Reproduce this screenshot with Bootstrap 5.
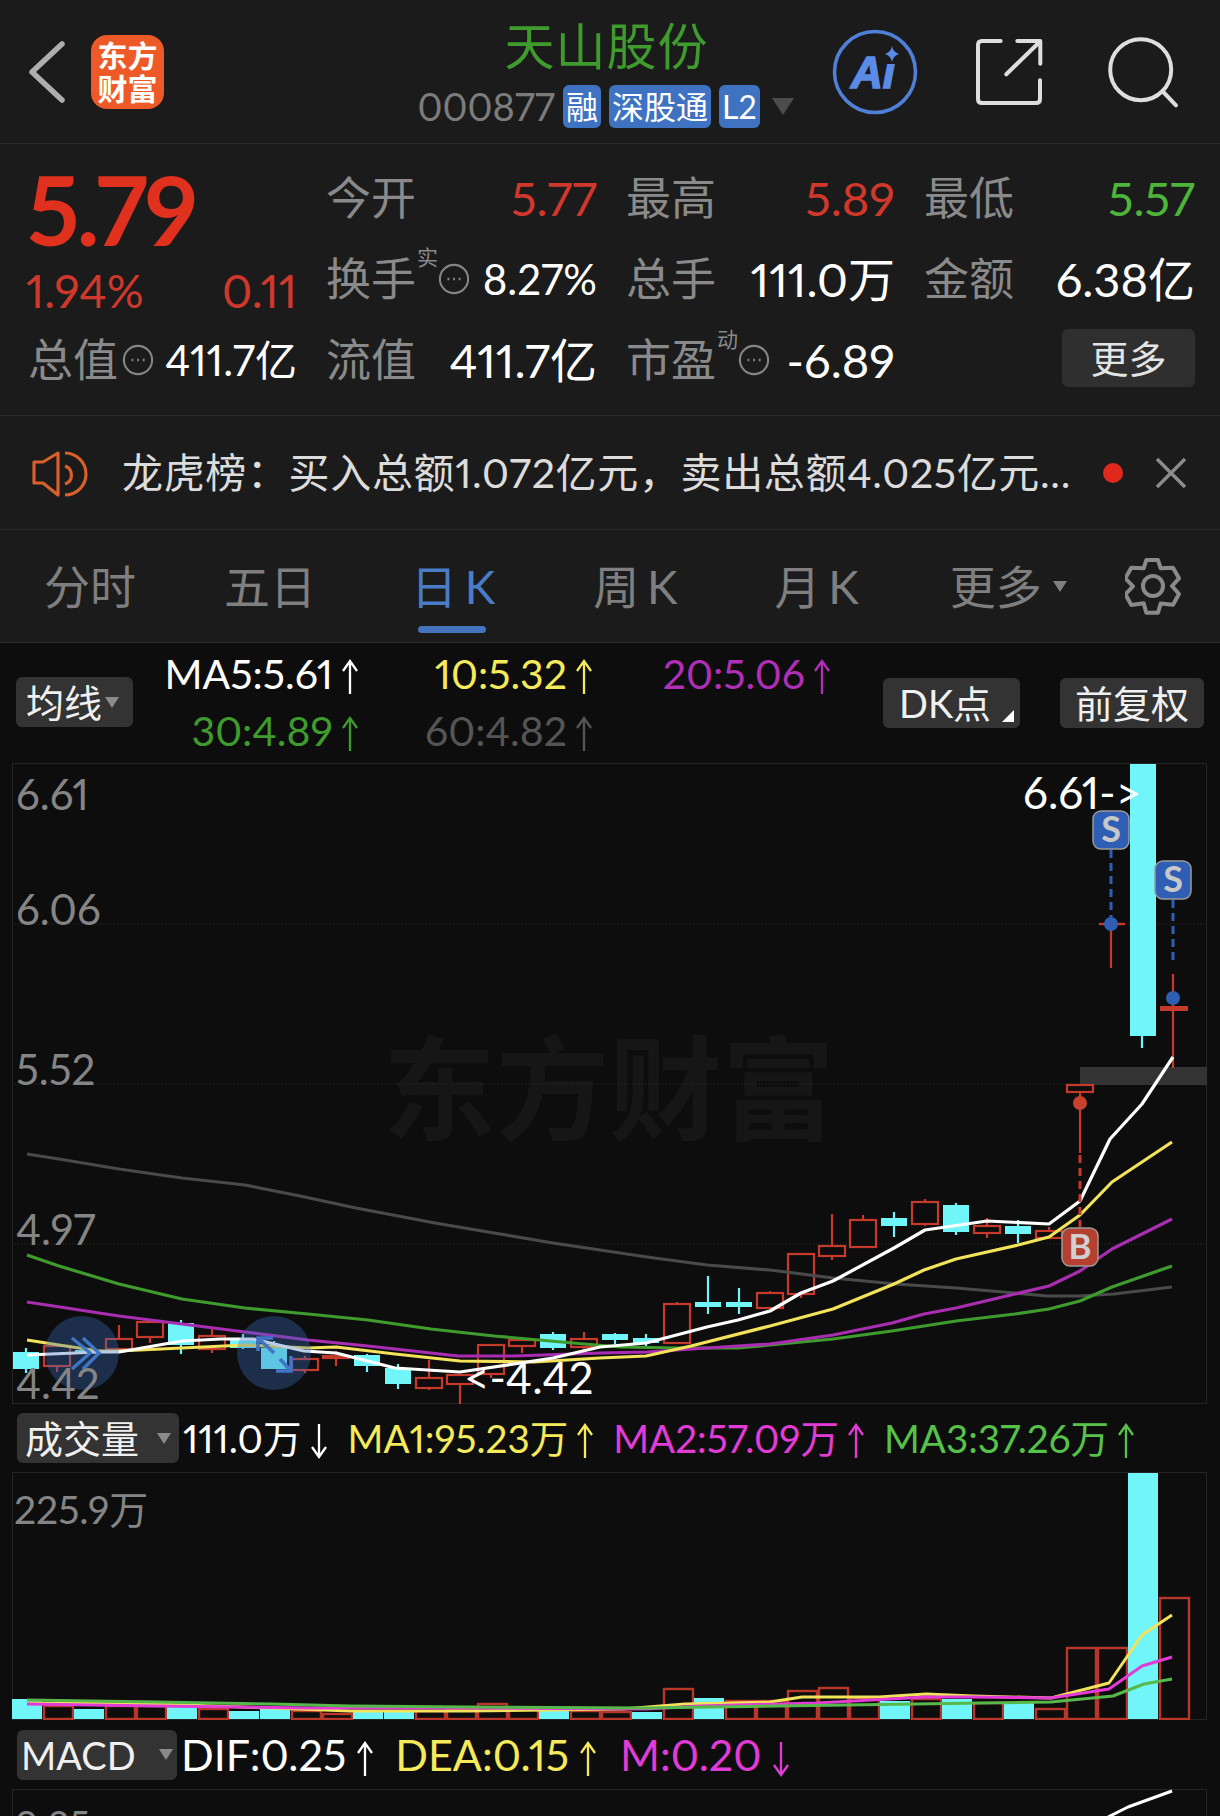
<!DOCTYPE html>
<html lang="zh-CN">
<head>
<meta charset="UTF-8">
<title>天山股份 000877</title>
<link href="https://cdn.jsdelivr.net/npm/bootstrap@5.3.3/dist/css/bootstrap.min.css" rel="stylesheet">
<style>
    html, body { background: #0d0d0d; }
    body { width: 1220px; height: 1816px; overflow: hidden; font-family: Lato, "Noto Sans CJK SC", sans-serif; font-weight: 400; color: #fff; font-variant-numeric: proportional-nums; }
    svg { display: block; }
    svg text { font-family: Lato, "Noto Sans CJK SC", sans-serif; }

    .top-bar { height: 144px; background: #1b1b1b; border-bottom: 1px solid #2b2b2b; display: grid; grid-template-columns: 1fr auto 1fr; padding: 0 39px 0 28px; }
    .app-logo { width: 73px; height: 74px; margin-left: 25px; border-radius: 16px; background: #ee5a27; font-size: 30px; line-height: 33px; font-weight: 700; text-align: center; padding-top: 4px; }
    .stock-name { color: #3f9b2d; font-size: 50px; line-height: 60px; margin-top: 16px; letter-spacing: 1px; text-align: center; padding-left: 4px; }
    .stock-code { color: #7c7c7c; font-size: 38px; line-height: 44px; }
    .code-row { margin-top: 8px; padding-left: 2px; }
    .tag-blue { background: #3f72c0; color: #fff; border-radius: 6px; height: 43px; line-height: 43px; padding: 0 3px; font-size: 32px; margin-left: 8px; }
    .tri-down { width: 0; height: 0; border: 11px solid transparent; border-top: 17px solid #4c4c4c; border-bottom: 0; margin-left: 12px; }

    .quote-panel { height: 272px; background: #1b1b1b; border-bottom: 1px solid #2b2b2b; padding: 14px 25px 0 28px; display: grid; grid-template-columns: 269px 271px 269px 271px; column-gap: 29px; grid-template-rows: 80px 82px 80px; }
    .price-cell { grid-row: span 2; }
    .big-price { color: #e0301e; font-size: 96px; line-height: 96px; font-weight: 700; margin: 3px 0 0 -1px; letter-spacing: -3px; }
    .price-sub { color: #d0382b; font-size: 46px; line-height: 50px; margin: 9px 0 0 -2px; }
    .q-label { color: #8a8a8a; font-size: 45px; line-height: 50px; white-space: nowrap; }
    .q-val { font-size: 47px; line-height: 50px; white-space: nowrap; }
    .q-val.tight { font-size: 42px; }
    .q-sup { color: #8a8a8a; font-size: 21px; line-height: 21px; align-self: flex-start; margin: 8px 0 0 1px; }
    .red-txt { color: #d0382b; }
    .green-txt { color: #4cb53a; }
    .more-btn { width: 133px; height: 58px; background: #2f2f2f; color: #e4e4e4; font-size: 38px; line-height: 58px; text-align: center; border-radius: 6px; margin-top: -5px; }

    .notice-row { height: 114px; background: #1b1b1b; border-bottom: 1px solid #2b2b2b; padding-left: 20px; }
    .notice-txt { color: #dcdcdc; font-size: 41px; letter-spacing: .65px; margin-left: 12px; width: 976px; white-space: nowrap; }
    .red-dot { width: 20px; height: 20px; border-radius: 50%; background: #e0281c; margin-left: 5px; }

    .tab-row { height: 113px; background: #1b1b1b; border-bottom: 1px solid #2b2b2b; position: relative; }
    .tab-item { position: relative; color: #7f7f7f; font-size: 46px; line-height: 113px; white-space: nowrap; word-spacing: -4px; margin-bottom: 0; }
    .tab-item.on { color: #4a7bc6; }
    .tab-item.on::after { content: ""; position: absolute; left: 7px; right: 9px; top: 96px; height: 7px; border-radius: 4px; background: #4673bd; }
    .tri-small { width: 0; height: 0; border: 7px solid transparent; border-top: 11px solid #7f7f7f; border-bottom: 0; margin-left: 11px; }

    .ma-head { height: 120px; padding: 4px 0 0 16px; }
    .sel-box { background: #333; color: #f0f0f0; border-radius: 6px; font-size: 38px; height: 50px; line-height: 50px; white-space: nowrap; }
    .ma-grid { display: grid; grid-template-columns: 234px 234px 238px; grid-auto-rows: 57px; margin-left: -6px; justify-items: end; margin-top: -2px; }
    .ma-item { font-size: 41px; line-height: 57px; white-space: nowrap; }
    .c-white { color: #fff; } .c-yellow { color: #f4ea5a; } .c-purple { color: #b02fb6; } .c-green { color: #3f9b2d; } .c-gray { color: #555; }
    .c-pink { color: #e23bd6; } .c-lime { color: #56c24a; }
    .arr { display: inline-block; width: 22px; height: 36px; vertical-align: -6px; margin-left: 6px; }
    .legend-row { height: 68px; padding-left: 17px; }
    .vol-row .ma-item { font-size: 38.6px; }
    .macd-row { height: 69px; }
    .macd-row .ma-item { font-size: 43px; }
    .macd-row .arr { margin-left: 8px; }
    .chart-wrap { margin-left: 12px; width: 1195px; }
</style>
</head>
<body>

<svg width="0" height="0" class="position-absolute">
    <symbol id="arrUp" viewBox="0 0 22 36"><path d="M11 35V2M4 12 11 2l7 10" fill="none" stroke="currentColor" stroke-width="2.3"/></symbol>
    <symbol id="arrDown" viewBox="0 0 22 36"><path d="M11 1v33M4 24l7 10 7-10" fill="none" stroke="currentColor" stroke-width="2.3"/></symbol>
    <symbol id="dotCircle" viewBox="0 0 34 34"><circle cx="17" cy="17" r="15" fill="none" stroke="#858585" stroke-width="2.2"/><path d="M10 17h2M16 17h2M22 17h2" stroke="#858585" stroke-width="2.4"/></symbol>
</svg>

<div class="top-bar">
    <div class="d-flex align-items-center">
        <svg width="38" height="64" viewBox="0 0 38 64"><path d="M34 4 4 32l30 28" fill="none" stroke="#aeaeae" stroke-width="5.5" stroke-linecap="round" stroke-linejoin="round"/></svg>
        <div class="app-logo">东方<br>财富</div>
    </div>
    <div>
        <div class="stock-name">天山股份</div>
        <div class="d-flex align-items-center code-row">
            <span class="stock-code">000877</span>
            <span class="tag-blue">融</span>
            <span class="tag-blue">深股通</span>
            <span class="tag-blue">L2</span>
            <span class="tri-down"></span>
        </div>
    </div>
    <div class="d-flex align-items-center justify-content-end">
        <svg width="88" height="88" viewBox="0 0 88 88" style="margin-right:54px">
            <circle cx="44" cy="44" r="40.5" fill="none" stroke="#4f7fd6" stroke-width="3.6"/>
            <text x="42" y="60" text-anchor="middle" fill="#5a8be6" stroke="#5a8be6" stroke-width="1.6" font-size="44" font-weight="700" font-style="italic" style="font-family:'Liberation Sans',sans-serif">Ai</text>
            <rect x="50" y="24" width="20" height="12" fill="#1b1b1b"/>
            <path d="M61 18q1 6 7 8-6 2-7 8-1-6-7-8 6-2 7-8z" fill="#5a8be6"/>
        </svg>
        <svg width="72" height="72" viewBox="0 0 72 72" style="margin-right:60px">
            <path d="M27.7 5H9q-4 0-4 4v54q0 4 4 4h54q4 0 4-4V44.3M44.3 5h23v22.7M67 5.5 33.3 38.3" fill="none" stroke="#dedede" stroke-width="4" stroke-linecap="round" stroke-linejoin="round"/>
        </svg>
        <svg width="76" height="80" viewBox="0 0 76 80">
            <circle cx="35.7" cy="37.7" r="30.5" fill="none" stroke="#dedede" stroke-width="4"/>
            <path d="M58.3 60 71 73.3" stroke="#dedede" stroke-width="4" stroke-linecap="round"/>
        </svg>
    </div>
</div>

<div class="quote-panel">
    <div class="price-cell">
        <div class="big-price">5.79</div>
        <div class="d-flex justify-content-between price-sub"><span>1.94%</span><span>0.11</span></div>
    </div>
    <div class="d-flex justify-content-between align-items-center"><span class="q-label">今开</span><span class="q-val red-txt">5.77</span></div>
    <div class="d-flex justify-content-between align-items-center"><span class="q-label">最高</span><span class="q-val red-txt">5.89</span></div>
    <div class="d-flex justify-content-between align-items-center"><span class="q-label">最低</span><span class="q-val green-txt">5.57</span></div>

    <div class="d-flex align-items-center"><span class="q-label">换手</span><span class="q-sup">实</span><svg width="32" height="32"><use href="#dotCircle"/></svg><span class="q-val tight ms-auto">8.27%</span></div>
    <div class="d-flex justify-content-between align-items-center"><span class="q-label">总手</span><span class="q-val">111.0万</span></div>
    <div class="d-flex justify-content-between align-items-center"><span class="q-label">金额</span><span class="q-val">6.38亿</span></div>

    <div class="d-flex align-items-center"><span class="q-label">总值</span><svg width="32" height="32" class="ms-1"><use href="#dotCircle"/></svg><span class="q-val tight ms-auto">411.7亿</span></div>
    <div class="d-flex justify-content-between align-items-center"><span class="q-label">流值</span><span class="q-val">411.7亿</span></div>
    <div class="d-flex align-items-center"><span class="q-label">市盈</span><span class="q-sup">动</span><svg width="32" height="32"><use href="#dotCircle"/></svg><span class="q-val ms-auto">-6.89</span></div>
    <div class="d-flex justify-content-end align-items-center"><span class="more-btn">更多</span></div>
</div>

<div class="notice-row d-flex align-items-center">
    <svg width="90" height="80" viewBox="0 0 90 80">
        <path d="M38 20 23 29H14V50H23L38 62Z" fill="none" stroke="#d9602a" stroke-width="3.2" stroke-linejoin="round"/>
        <path d="M45 33A9.5 9.5 0 0 1 45 51M45 20A21 21 0 0 1 45 62" fill="none" stroke="#d9602a" stroke-width="3.2"/>
    </svg>
    <div class="notice-txt">龙虎榜：买入总额1.072亿元，卖出总额4.025亿元...</div>
    <span class="red-dot"></span>
    <svg width="34" height="34" viewBox="0 0 34 34" style="margin-left:31px"><path d="M3 3 31 31M31 3 3 31" stroke="#8c8c8c" stroke-width="3.4"/></svg>
</div>

<nav class="tab-row d-flex">
    <div class="tab-item" style="margin-left:44px">分时</div>
    <div class="tab-item" style="margin-left:88px">五日</div>
    <div class="tab-item on" style="margin-left:95px">日 K</div>
    <div class="tab-item" style="margin-left:98px">周 K</div>
    <div class="tab-item" style="margin-left:97px">月 K</div>
    <div class="tab-item d-flex align-items-center" style="margin-left:91px">更多<span class="tri-small"></span></div>
    <svg class="ms-auto align-self-center" style="margin-right:35px" width="60" height="60" viewBox="27 15 60 60">
        <path d="M48.3 19H60l2.7 8.3L75 26.7 81 37.3 74 45l7 8-6 10.7-12.3-1.3L60 71.7H48.3l-2.6-9.4-12.4 1.7-6-10.7 7.7-8-7.7-8 6-10.6 12.4.6z" fill="none" stroke="#8a8a8a" stroke-width="4" stroke-linejoin="round"/>
        <circle cx="55" cy="45" r="10" fill="none" stroke="#8a8a8a" stroke-width="4"/>
    </svg>
</nav>

<div class="ma-head d-flex align-items-start">
    <div class="sel-box d-flex align-items-center" style="width:117px;margin-top:30px;padding-left:10px">均线<span class="tri-small" style="margin-left:3px;border-top-color:#8a8a8a"></span></div>
    <div class="ma-grid">
        <div class="ma-item c-white">MA5:5.61<svg class="arr"><use href="#arrUp"/></svg></div>
        <div class="ma-item c-yellow">10:5.32<svg class="arr"><use href="#arrUp"/></svg></div>
        <div class="ma-item c-purple">20:5.06<svg class="arr"><use href="#arrUp"/></svg></div>
        <div class="ma-item c-green">30:4.89<svg class="arr"><use href="#arrUp"/></svg></div>
        <div class="ma-item c-gray">60:4.82<svg class="arr"><use href="#arrUp"/></svg></div>
    </div>
    <div class="sel-box position-relative ps-3" style="width:137px;margin:31px 0 0 50px">DK点<span class="position-absolute" style="right:6px;bottom:6px;width:0;height:0;border-left:12px solid transparent;border-bottom:12px solid #fff"></span></div>
    <div class="sel-box text-center" style="width:144px;margin:31px 0 0 40px">前复权</div>
</div>

<div class="chart-wrap" id="mainChart"></div>

<div class="legend-row vol-row d-flex align-items-center">
    <div class="sel-box d-flex align-items-center justify-content-between px-2" style="width:162px">成交量<span class="tri-small" style="border-top-color:#8a8a8a"></span></div>
    <div class="ma-item c-white ms-1">111.0万<svg class="arr"><use href="#arrDown"/></svg></div>
    <div class="ma-item c-yellow" style="margin-left:18px">MA1:95.23万<svg class="arr"><use href="#arrUp"/></svg></div>
    <div class="ma-item c-pink" style="margin-left:17px">MA2:57.09万<svg class="arr"><use href="#arrUp"/></svg></div>
    <div class="ma-item c-lime" style="margin-left:17px">MA3:37.26万<svg class="arr"><use href="#arrUp"/></svg></div>
</div>

<div class="chart-wrap" id="volChart"></div>

<div class="legend-row macd-row d-flex align-items-center">
    <div class="sel-box d-flex align-items-center justify-content-between px-1" style="width:160px">MACD<span class="tri-small" style="border-top-color:#8a8a8a"></span></div>
    <div class="ma-item c-white ms-1">DIF:0.25<svg class="arr"><use href="#arrUp"/></svg></div>
    <div class="ma-item c-yellow" style="margin-left:19px">DEA:0.15<svg class="arr"><use href="#arrUp"/></svg></div>
    <div class="ma-item c-pink" style="margin-left:21px">M:0.20<svg class="arr"><use href="#arrDown"/></svg></div>
</div>

<div class="chart-wrap" id="macdChart"></div>

<script src="https://cdn.jsdelivr.net/npm/bootstrap@5.3.3/dist/js/bootstrap.bundle.min.js"></script>
<script>
    const RED = '#c63a2c', CYAN = '#70f5f8';

    // c/r, body top, body bottom, wick top, wick bottom
    const candles = [
        ['c',1351,1368,1347,1372],['r',1345,1365,1345,1371],['c',1349,1352,1347,1354],['r',1338,1348,1324,1348],
        ['r',1321,1336,1321,1342],['c',1322,1344,1319,1353],['r',1335,1348,1327,1352],['c',1337,1347,1333,1348],
        ['c',1347,1368,1340,1368],['r',1358,1369,1355,1372],['r',1355,1357,1350,1365],['c',1354,1365,1353,1371],
        ['c',1367,1383,1363,1388],['r',1377,1387,1359,1389],['r',1374,1383,1374,1403],['r',1344,1373,1344,1377],
        ['r',1339,1345,1339,1352],['c',1333,1347,1331,1349],['r',1338,1346,1331,1348],['c',1333,1339,1332,1343],
        ['c',1337,1342,1333,1345],['r',1303,1342,1301,1342],['c',1301,1306,1275,1313],['c',1301,1306,1287,1313],
        ['r',1292,1307,1290,1308],['r',1253,1293,1252,1297],['r',1245,1255,1213,1259],['r',1219,1246,1214,1246],
        ['c',1217,1225,1211,1236],['r',1201,1223,1198,1225],['c',1204,1231,1202,1234],['r',1225,1232,1217,1237],
        ['c',1225,1233,1219,1242],['r',1230,1237,1226,1237],['r',1084,1091,1091,1152],['r',922,924,923,967],
        ['c',763,1035,763,1047],['r',1005,1009,973,1067]
    ];

    const lines = [
        ['#4a4a4a', [[27,1153],[59,1158],[119,1168],[182,1177],[245,1184],[300,1195],[356,1207],[435,1222],[494,1232],[553,1242],[620,1252],[647,1256],[707,1264],[770,1269],[833,1277],[896,1283],[956,1287],[1015,1292],[1047,1295],[1080,1295],[1114,1293],[1172,1286]]],
        ['#3f9b2d', [[27,1254],[59,1265],[119,1283],[182,1298],[245,1307],[308,1313],[368,1319],[431,1328],[494,1335],[573,1342],[620,1346],[679,1347],[738,1347],[770,1344],[833,1338],[892,1330],[956,1320],[1015,1313],[1049,1308],[1080,1300],[1112,1286],[1172,1265]]],
        ['#a92db0', [[27,1301],[119,1315],[182,1323],[245,1331],[308,1339],[368,1345],[458,1355],[514,1355],[600,1352],[647,1351],[707,1347],[770,1343],[833,1334],[892,1322],[924,1313],[956,1307],[1015,1293],[1049,1285],[1080,1270],[1112,1248],[1172,1218]]],
        ['#f2e35a', [[27,1339],[59,1344],[99,1350],[119,1350],[182,1347],[245,1344],[308,1347],[336,1346],[395,1353],[460,1360],[534,1361],[600,1357],[646,1355],[691,1345],[770,1325],[833,1308],[894,1283],[924,1269],[956,1258],[1018,1244],[1049,1236],[1080,1214],[1112,1181],[1172,1141]]],
        ['#ffffff', [[27,1354],[99,1351],[119,1351],[182,1340],[221,1338],[253,1338],[304,1350],[336,1352],[395,1367],[460,1371],[514,1363],[553,1357],[600,1346],[646,1342],[707,1326],[738,1319],[770,1310],[801,1292],[833,1280],[894,1247],[925,1229],[987,1220],[1049,1223],[1080,1200],[1110,1138],[1142,1103],[1173,1056]]]
    ];

    function poly(pts, color, w) {
        return `<polyline points="${pts.map(p => p.join(',')).join(' ')}" fill="none" stroke="${color}" stroke-width="${w}" stroke-linejoin="round"/>`;
    }

    function grayLabel(x, y, t, size) {
        return `<text x="${x}" y="${y}" fill="#858585" font-size="${size}">${t}</text>`;
    }

    function signal(x, top, dashEnd, color, label) {
        return `<line x1="${x}" y1="${top + 39}" x2="${x}" y2="${dashEnd}" stroke="${color}" stroke-width="3" stroke-dasharray="8 5"/>` +
            `<rect x="${x - 18}" y="${top}" width="36" height="38" rx="8" fill="${color}" stroke="#9a9a9a" stroke-width="1.5"/>` +
            `<text x="${x}" y="${top + 31}" text-anchor="middle" fill="#c8c8c8" font-size="36" font-weight="700">${label}</text>`;
    }

    function drawMain() {
        let s = `<svg width="1195" height="641" viewBox="12 762 1195 641">`;
        s += `<rect x="12.5" y="762.5" width="1194" height="640" fill="#0d0d0d" stroke="#252525"/>`;
        s += `<text x="383" y="1130" fill="#161616" font-size="113" font-weight="700">东方财富</text>`;
        [923, 1083, 1243].forEach(y => {
            s += `<line x1="12" x2="1207" y1="${y}" y2="${y}" stroke="#2c2c2c" stroke-dasharray="1 2"/>`;
        });
        s += `<rect x="1080" y="1066" width="127" height="18" fill="#333"/>`;

        candles.forEach((c, i) => {
            const x = 26 + i * 31;
            const color = c[0] === 'c' ? CYAN : RED;
            s += `<line x1="${x}" x2="${x}" y1="${c[3]}" y2="${c[4]}" stroke="${color}" stroke-width="2.2"/>`;
            if (i === 36) {
                s += `<rect x="1130" y="763" width="26" height="272" fill="${CYAN}"/>`;
            } else if (i === 35) {
                s += `<line x1="1099" x2="1125" y1="923" y2="923" stroke="${RED}" stroke-width="2.4"/>`;
            } else if (i === 37) {
                s += `<rect x="1160" y="1005" width="28" height="5" fill="${RED}"/>`;
            } else if (c[0] === 'c') {
                s += `<rect x="${x - 13}" y="${c[1]}" width="26" height="${c[2] - c[1]}" fill="${CYAN}"/>`;
            } else {
                s += `<rect x="${x - 13}" y="${c[1]}" width="26" height="${Math.max(c[2] - c[1], 2)}" fill="#0d0d0d" stroke="${RED}" stroke-width="2.2"/>`;
            }
        });

        lines.forEach(l => { s += poly(l[1], l[0], 3.2); });

        // blue markers sit over the candles and the lines
        s += `<circle cx="82" cy="1352" r="37" fill="#3c6ebe" fill-opacity=".35"/><circle cx="274" cy="1352" r="37" fill="#3c6ebe" fill-opacity=".35"/>`;
        s += `<path d="M72 1337 90 1352 72 1368M83 1337 99 1352 83 1368" fill="none" stroke="#3f75c6" stroke-width="3.4"/>`;
        s += `<path d="M258 1350V1337H273M258 1337 274 1352M291 1355V1370H276M280 1358 291 1370" fill="none" stroke="#3f75c6" stroke-width="3.6"/>`;

        s += grayLabel(16, 809, '6.61', 42) + grayLabel(16, 924, '6.06', 42) + grayLabel(16, 1084, '5.52', 42) + grayLabel(16, 1244, '4.97', 42) + grayLabel(16, 1398, '4.42', 42);
        s += `<text x="1023" y="808" fill="#fff" font-size="44">6.61-&gt;</text>`;
        s += `<text x="464" y="1393" fill="#fff" font-size="44">&lt;-4.42</text>`;

        s += signal(1111, 810, 916, '#2f5fb4', 'S') + `<circle cx="1111" cy="923" r="7" fill="#2f5fb4"/>`;
        s += signal(1173, 860, 960, '#2f5fb4', 'S') + `<circle cx="1173" cy="997" r="7" fill="#2f5fb4"/>`;
        s += `<circle cx="1080" cy="1102" r="7" fill="#c8412e"/>`;
        s += `<line x1="1080" x2="1080" y1="1154" y2="1226" stroke="${RED}" stroke-width="3" stroke-dasharray="8 5"/>`;
        s += `<rect x="1062" y="1227" width="36" height="38" rx="8" fill="#b5402f" stroke="#9a9a9a" stroke-width="1.5"/>`;
        s += `<text x="1080" y="1258" text-anchor="middle" fill="#d0d0d0" font-size="35" font-weight="700">B</text>`;
        document.getElementById('mainChart').innerHTML = s + '</svg>';
    }

    // bar tops, one per day
    const volBars = [
        ['c',1698],['r',1705],['c',1708],['r',1705],['r',1705],['c',1705],['r',1708],['c',1710],['c',1707],['r',1710],
        ['r',1713],['c',1710],['c',1711],['r',1710],['r',1708],['r',1703],['r',1708],['c',1710],['r',1710],['r',1711],
        ['c',1711],['r',1688],['c',1697],['r',1700],['r',1700],['r',1690],['r',1687],['r',1697],['c',1700],['r',1698],
        ['c',1698],['r',1702],['c',1702],['r',1708],['r',1647],['r',1647],['c',1472],['r',1597]
    ];
    const volLines = [
        ['#f2e35a', [[27,1702],[156,1703],[272,1707],[350,1710],[467,1710],[623,1708],[685,1703],[770,1701],[802,1696],[879,1696],[926,1693],[973,1695],[1051,1697],[1109,1682],[1142,1634],[1172,1614]]],
        ['#e23bd6', [[27,1703],[156,1705],[311,1707],[467,1707],[646,1708],[700,1705],[817,1702],[926,1696],[973,1696],[1051,1697],[1109,1688],[1142,1665],[1172,1656]]],
        ['#56b84a', [[27,1699],[156,1701],[272,1703],[350,1705],[467,1706],[646,1707],[778,1705],[1051,1701],[1113,1695],[1144,1683],[1172,1678]]]
    ];

    function drawVol() {
        let s = `<svg width="1195" height="248" viewBox="12 1471 1195 248">`;
        s += `<rect x="12.5" y="1471.5" width="1194" height="247" fill="#0d0d0d" stroke="#252525"/>`;
        volBars.forEach((b, i) => {
            const x = 12 + i * 31;
            if (b[0] === 'c') {
                s += `<rect x="${x}" y="${b[1]}" width="30" height="${1718 - b[1]}" fill="${CYAN}"/>`;
            } else {
                s += `<rect x="${x + 1}" y="${b[1]}" width="29" height="${1718 - b[1]}" fill="#0d0d0d" stroke="#b8362a" stroke-width="2.4"/>`;
            }
        });
        volLines.forEach(l => { s += poly(l[1], l[0], 3); });
        s += grayLabel(14, 1523, '225.9万', 39);
        document.getElementById('volChart').innerHTML = s + '</svg>';
    }

    function drawMacd() {
        let s = `<svg width="1195" height="28" viewBox="12 1788 1195 28">`;
        s += `<rect x="12.5" y="1788.5" width="1194" height="60" fill="#0d0d0d" stroke="#252525"/>`;
        s += poly([[1108,1816],[1128,1806],[1172,1790]], '#fff', 3);
        s += grayLabel(14, 1838, '0.25', 38);
        document.getElementById('macdChart').innerHTML = s + '</svg>';
    }

    drawMain();
    drawVol();
    drawMacd();
</script>
</body>
</html>
